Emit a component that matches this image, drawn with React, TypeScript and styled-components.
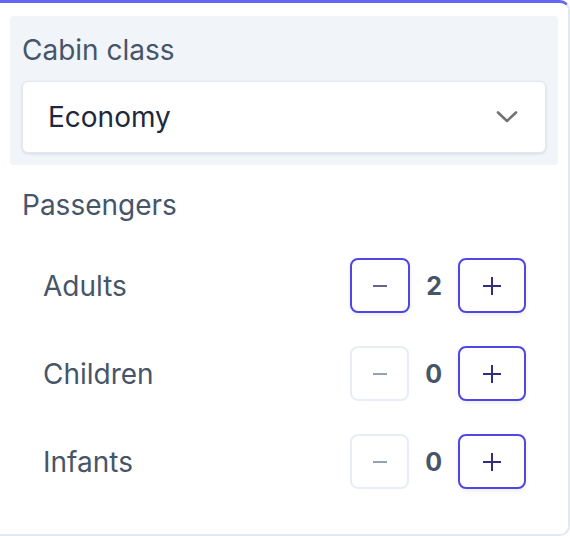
import React, { useState } from 'react';
import styled, { createGlobalStyle } from 'styled-components';

const GlobalStyle = createGlobalStyle`
  body {
    margin: 0;
    background: #fff;
    font-family: Inter, "Noto Sans", sans-serif;
  }
`;

const Card = styled.div`
  box-sizing: border-box;
  width: 570px;
  height: 536px;
  background: #fff;
  border-top: 3px solid #6366f1;
  border-right: 2px solid #e2e8f0;
  border-bottom: 2px solid #e2e8f0;
  border-radius: 0 10px 10px 0;
  padding: 13px 10px 0 10px;
`;

const CabinSection = styled.div`
  background: #f1f5f9;
  border-radius: 4px;
  padding: 13px 12px 12px;
`;

const Label = styled.div`
  font-size: 28px;
  line-height: 42px;
  color: #475569;
`;

const Select = styled.div`
  margin-top: 10px;
  height: 72px;
  box-sizing: border-box;
  display: flex;
  align-items: center;
  justify-content: space-between;
  padding: 0 27px 0 25px;
  background: #fff;
  border: 1px solid #e2e8f0;
  border-radius: 6px;
  box-shadow: 0 1px 3px rgba(15, 23, 42, 0.12);
  font-size: 28px;
  color: #1e293b;
`;

const PassengerSection = styled.div`
  margin-top: 19px;
  padding: 0 12px;
`;

const Rows = styled.div`
  margin-top: 32px;
  padding: 0 20px 0 21px;
  display: flex;
  flex-direction: column;
  gap: 33px;
`;

const Row = styled.div`
  display: flex;
  align-items: center;
  justify-content: space-between;
  height: 55px;
`;

const RowLabel = styled.span`
  font-size: 28px;
  color: #475569;
`;

const Stepper = styled.div`
  display: flex;
  align-items: center;
  gap: 16px;
`;

const StepButton = styled.button<{ $wide?: boolean }>`
  box-sizing: border-box;
  width: ${(p) => (p.$wide ? '68px' : '60px')};
  height: 55px;
  display: flex;
  align-items: center;
  justify-content: center;
  padding: 0;
  background: #fff;
  border: 2px solid #4f46e5;
  border-radius: 8px;
  box-shadow: 0 2px 4px rgba(15, 23, 42, 0.08);
  color: #312e81;
  cursor: pointer;

  &:disabled {
    width: 59px;
    border-color: #e8edf3;
    box-shadow: none;
    color: #94a3b8;
    cursor: default;
  }
`;

const Count = styled.span`
  font-size: 25px;
  font-weight: 700;
  color: #475569;
`;

const Chevron = () => (
  <svg width="22" height="12" viewBox="0 0 22 12" fill="none">
    <path d="M2 1.5 L11 10 L20 1.5" stroke="#737373" strokeWidth="2.6" strokeLinecap="round" strokeLinejoin="round" />
  </svg>
);

const MinusIcon = ({ color }: { color: string }) => (
  <svg width="14" height="4" viewBox="0 0 14 4">
    <line x1="0" y1="2" x2="14" y2="2" stroke={color} strokeWidth="2" />
  </svg>
);

const PlusIcon = () => (
  <svg width="18" height="18" viewBox="0 0 18 18">
    <line x1="0" y1="9" x2="18" y2="9" stroke="currentColor" strokeWidth="2" />
    <line x1="9" y1="0" x2="9" y2="18" stroke="currentColor" strokeWidth="2" />
  </svg>
);

type Passenger = { key: string; label: string; min: number };

const passengers: Passenger[] = [
  { key: 'adults', label: 'Adults', min: 1 },
  { key: 'children', label: 'Children', min: 0 },
  { key: 'infants', label: 'Infants', min: 0 },
];

const App: React.FC = () => {
  const [counts, setCounts] = useState<Record<string, number>>({ adults: 2, children: 0, infants: 0 });

  const change = (key: string, delta: number) =>
    setCounts((c) => ({ ...c, [key]: c[key] + delta }));

  return (
    <>
      <GlobalStyle />
      <Card>
        <CabinSection>
          <Label>Cabin class</Label>
          <Select>
            <span>Economy</span>
            <Chevron />
          </Select>
        </CabinSection>
        <PassengerSection>
          <Label>Passengers</Label>
          <Rows>
            {passengers.map((p) => {
              const disabled = counts[p.key] <= p.min;
              return (
                <Row key={p.key}>
                  <RowLabel>{p.label}</RowLabel>
                  <Stepper>
                    <StepButton disabled={disabled} onClick={() => change(p.key, -1)}>
                      <MinusIcon color={disabled ? '#94a3b8' : '#64648f'} />
                    </StepButton>
                    <Count>{counts[p.key]}</Count>
                    <StepButton $wide onClick={() => change(p.key, 1)}>
                      <PlusIcon />
                    </StepButton>
                  </Stepper>
                </Row>
              );
            })}
          </Rows>
        </PassengerSection>
      </Card>
    </>
  );
};

export default App;
